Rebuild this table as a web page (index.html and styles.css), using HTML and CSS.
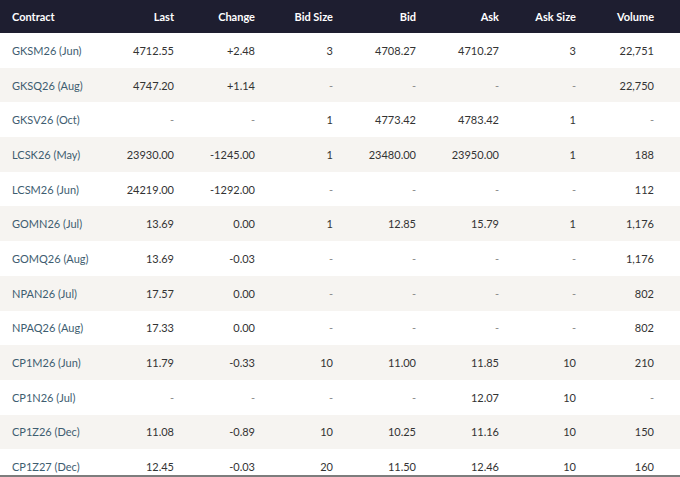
FILE: index.html
```html
<!DOCTYPE html>
<html>
<head>
<meta charset="utf-8">
<link rel="stylesheet" href="styles.css">
</head>
<body>
<div class="frame">
<table class="quotes">
<colgroup>
<col class="c-contract"><col class="c-last"><col class="c-change"><col class="c-bsize"><col class="c-bid"><col class="c-ask"><col class="c-asize"><col class="c-vol">
</colgroup>
<thead>
<tr><th class="left">Contract</th><th>Last</th><th>Change</th><th>Bid Size</th><th>Bid</th><th>Ask</th><th>Ask Size</th><th class="vol">Volume</th></tr>
</thead>
<tbody>
<tr><td class="name">GKSM26 (Jun)</td><td>4712.55</td><td>+2.48</td><td>3</td><td>4708.27</td><td>4710.27</td><td>3</td><td class="vol">22,751</td></tr>
<tr><td class="name">GKSQ26 (Aug)</td><td>4747.20</td><td>+1.14</td><td class="na">-</td><td class="na">-</td><td class="na">-</td><td class="na">-</td><td class="vol">22,750</td></tr>
<tr><td class="name">GKSV26 (Oct)</td><td class="na">-</td><td class="na">-</td><td>1</td><td>4773.42</td><td>4783.42</td><td>1</td><td class="vol na">-</td></tr>
<tr><td class="name">LCSK26 (May)</td><td>23930.00</td><td>-1245.00</td><td>1</td><td>23480.00</td><td>23950.00</td><td>1</td><td class="vol">188</td></tr>
<tr><td class="name">LCSM26 (Jun)</td><td>24219.00</td><td>-1292.00</td><td class="na">-</td><td class="na">-</td><td class="na">-</td><td class="na">-</td><td class="vol">112</td></tr>
<tr><td class="name">GOMN26 (Jul)</td><td>13.69</td><td>0.00</td><td>1</td><td>12.85</td><td>15.79</td><td>1</td><td class="vol">1,176</td></tr>
<tr><td class="name">GOMQ26 (Aug)</td><td>13.69</td><td>-0.03</td><td class="na">-</td><td class="na">-</td><td class="na">-</td><td class="na">-</td><td class="vol">1,176</td></tr>
<tr><td class="name">NPAN26 (Jul)</td><td>17.57</td><td>0.00</td><td class="na">-</td><td class="na">-</td><td class="na">-</td><td class="na">-</td><td class="vol">802</td></tr>
<tr><td class="name">NPAQ26 (Aug)</td><td>17.33</td><td>0.00</td><td class="na">-</td><td class="na">-</td><td class="na">-</td><td class="na">-</td><td class="vol">802</td></tr>
<tr><td class="name">CP1M26 (Jun)</td><td>11.79</td><td>-0.33</td><td>10</td><td>11.00</td><td>11.85</td><td>10</td><td class="vol">210</td></tr>
<tr><td class="name">CP1N26 (Jul)</td><td class="na">-</td><td class="na">-</td><td class="na">-</td><td class="na">-</td><td>12.07</td><td>10</td><td class="vol na">-</td></tr>
<tr><td class="name">CP1Z26 (Dec)</td><td>11.08</td><td>-0.89</td><td>10</td><td>10.25</td><td>11.16</td><td>10</td><td class="vol">150</td></tr>
<tr><td class="name">CP1Z27 (Dec)</td><td>12.45</td><td>-0.03</td><td>20</td><td>11.50</td><td>12.46</td><td>10</td><td class="vol">160</td></tr>
</tbody>
</table>
</div>
</body>
</html>
```
FILE: styles.css
```css
html, body {
  margin: 0;
  padding: 0;
  background: #ffffff;
}
body {
  font-family: Lato, "Liberation Sans", sans-serif;
  font-size: 11px;
  color: #333333;
}
.frame {
  width: 680px;
  height: 475px;
  overflow: hidden;
  border-bottom: 2px solid #7d7d7d;
}
.quotes {
  width: 680px;
  border-collapse: collapse;
  table-layout: fixed;
}
.c-contract { width: 110px; }
.c-last { width: 76px; }
.c-change { width: 81px; }
.c-bsize { width: 78px; }
.c-bid { width: 83px; }
.c-ask { width: 83px; }
.c-asize { width: 77px; }
.c-vol { width: 92px; }
.quotes th {
  background: #1e1e30;
  color: #ffffff;
  font-weight: 700;
  height: 33px;
  padding: 0 12px 0 0;
  text-align: right;
  vertical-align: middle;
  white-space: nowrap;
}
.quotes td {
  height: 34.7px;
  padding: 0 12px 0 0;
  text-align: right;
  vertical-align: middle;
  white-space: nowrap;
  color: #333333;
}
.quotes th.left, .quotes td.name {
  text-align: left;
  padding-left: 12px;
  padding-right: 0;
}
.quotes td.name {
  color: #3e5d70;
}
.quotes th.vol, .quotes td.vol {
  padding-right: 26px;
}
.quotes td.na {
  color: #888888;
}
.quotes tbody tr:nth-child(even) td {
  background: #f6f4f1;
}
```
